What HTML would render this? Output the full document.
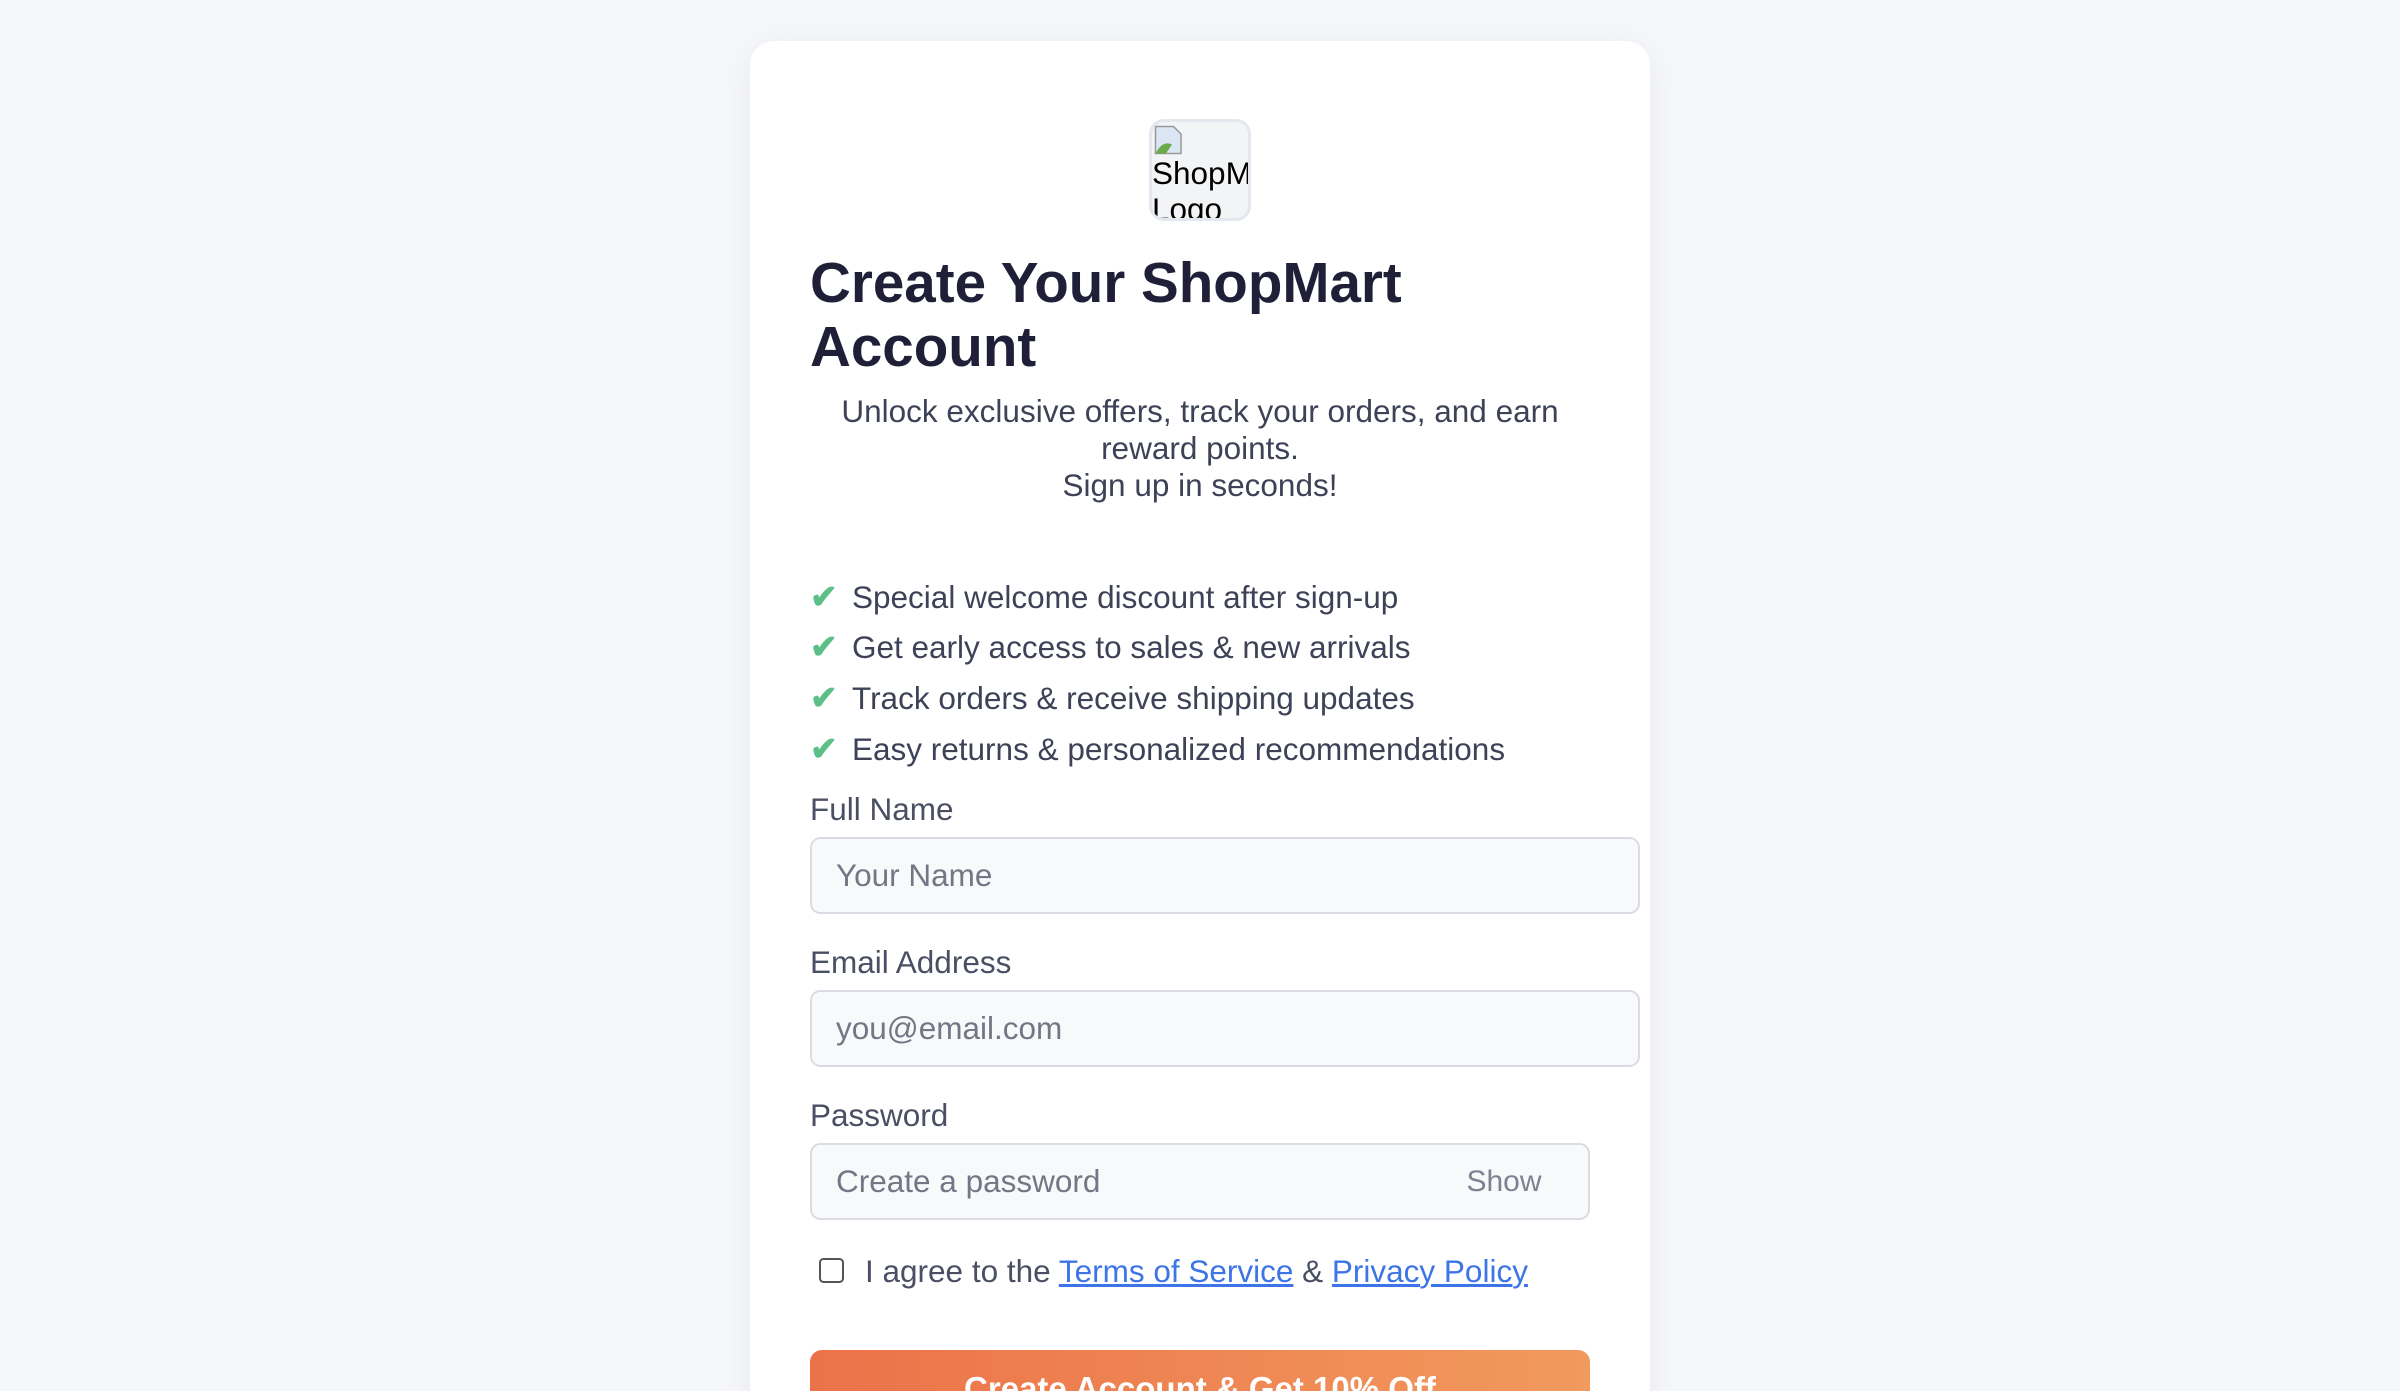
<!DOCTYPE html>
<html style="overflow:hidden;height:927px"><head><meta charset="utf-8"><style>
html{zoom:1.5}
body{margin:0;background:#f6f7f9;font-family:"Liberation Sans",Arial,sans-serif;width:1600px;height:927px;overflow:hidden;position:relative}
.card{position:absolute;left:500px;top:27px;width:520px;height:1000px;padding:0 40px;background:#fff;border-radius:16px;box-shadow:0 4px 24px rgba(30,40,60,.06);overflow:hidden}
.logo{position:absolute;left:266px;top:52px;width:64px;height:64px;border:2px solid #e3e7ee;border-radius:10px;background:#f3f4f6;overflow:hidden;font-size:21px;line-height:24px;color:#000;white-space:nowrap}
.logo .ic{width:20px;height:20px;margin:2px 0 0 1px;display:block}
h1{position:absolute;left:40px;top:140px;margin:0;font-size:37.7px;line-height:43px;color:#1f2038;font-weight:bold;width:520px}
.sub{position:absolute;left:40px;top:235px;width:520px;text-align:center;font-size:21px;line-height:24.5px;color:#3d4257}
ul{position:absolute;left:40px;top:354px;margin:0;padding:0;list-style:none;font-size:21px;line-height:33.3px;color:#3d4257}
ul li span{color:#5cbf88;font-size:22px;font-weight:bold;display:inline-block;width:28px}
.lab{position:absolute;left:40px;font-size:21px;color:#4a4f63}
.inp{position:absolute;left:40px;width:553px;height:51px;box-sizing:border-box;border:1.5px solid #d9dce2;border-radius:7px;background:#f8f9fb;font-size:21px;color:#737785;padding-left:16px;line-height:49px}
.show{position:absolute;right:31px;top:0;color:#7c8291;font-size:20px}
.agree{position:absolute;left:46px;top:808px;font-size:21px;color:#4a4f63}
.cb{display:inline-block;width:14px;height:14px;border:1.5px solid #555;border-radius:3px;vertical-align:-1px;margin-right:14px}
.agree a{color:#3d74e8;text-decoration:underline}
.btn{position:absolute;left:40px;top:873px;width:520px;height:60px;border-radius:8px;background:linear-gradient(90deg,#ec7249,#f19a5d);color:#fff;font-weight:bold;font-size:22px;text-align:center;line-height:52px}
</style></head><body>
<div class="card">
<div class="logo"><svg class="ic" viewBox="0 0 20 20"><path d="M1 1h12l5 5v13H1z" fill="#dbe6f5" stroke="#999"/><path d="M1 19c3-6 7-8 11-6l-4 6z" fill="#6aaa4a"/></svg>ShopMart<br>Logo</div>
<h1>Create Your ShopMart Account</h1>
<div class="sub">Unlock exclusive offers, track your orders, and earn reward points.<br>Sign up in seconds!</div>
<ul>
<li><span>✔</span>Special welcome discount after sign-up</li>
<li><span>✔</span>Get early access to sales &amp; new arrivals</li>
<li><span>✔</span>Track orders &amp; receive shipping updates</li>
<li><span>✔</span>Easy returns &amp; personalized recommendations</li>
</ul>
<div class="lab" style="top:500px">Full Name</div>
<div class="inp" style="top:531px">Your Name</div>
<div class="lab" style="top:602px">Email Address</div>
<div class="inp" style="top:633px">you@email.com</div>
<div class="lab" style="top:704px">Password</div>
<div class="inp" style="top:735px;width:520px">Create a password<span class="show">Show</span></div>
<div class="agree"><span class="cb"></span>I agree to the <a>Terms of Service</a> &amp; <a>Privacy Policy</a></div>
<div class="btn">Create Account &amp; Get 10% Off</div>
</div>
</body></html>
